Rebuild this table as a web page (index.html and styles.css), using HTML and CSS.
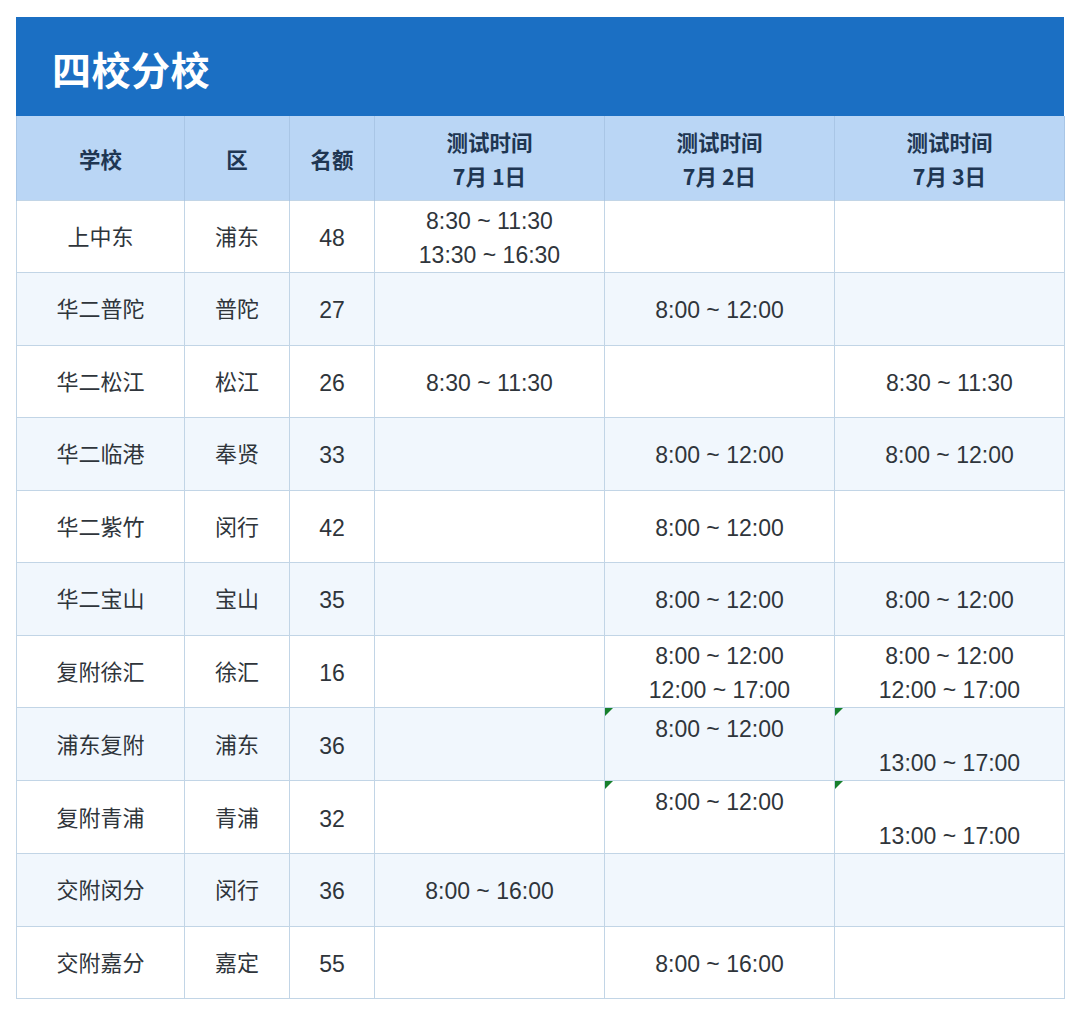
FILE: index.html
```html
<!DOCTYPE html>
<html lang="zh-CN">
<head>
<meta charset="utf-8">
<title>四校分校</title>
<link rel="stylesheet" href="styles.css">
</head>
<body>
<div class="sheet">
  <div class="title">四校分校</div>
  <table class="grid">
    <colgroup>
      <col class="c-school"><col class="c-area"><col class="c-num"><col class="c-day"><col class="c-day"><col class="c-day">
    </colgroup>
    <thead>
      <tr>
        <th>学校</th><th>区</th><th>名额</th>
        <th>测试时间<br>7月 1日</th>
        <th>测试时间<br>7月 2日</th>
        <th>测试时间<br>7月 3日</th>
      </tr>
    </thead>
    <tbody>
      <tr><td class="cn">上中东</td><td class="cn">浦东</td><td>48</td><td>8:30 ~ 11:30<br>13:30 ~ 16:30</td><td></td><td></td></tr>
      <tr><td class="cn">华二普陀</td><td class="cn">普陀</td><td>27</td><td></td><td>8:00 ~ 12:00</td><td></td></tr>
      <tr><td class="cn">华二松江</td><td class="cn">松江</td><td>26</td><td>8:30 ~ 11:30</td><td></td><td>8:30 ~ 11:30</td></tr>
      <tr><td class="cn">华二临港</td><td class="cn">奉贤</td><td>33</td><td></td><td>8:00 ~ 12:00</td><td>8:00 ~ 12:00</td></tr>
      <tr><td class="cn">华二紫竹</td><td class="cn">闵行</td><td>42</td><td></td><td>8:00 ~ 12:00</td><td></td></tr>
      <tr><td class="cn">华二宝山</td><td class="cn">宝山</td><td>35</td><td></td><td>8:00 ~ 12:00</td><td>8:00 ~ 12:00</td></tr>
      <tr><td class="cn">复附徐汇</td><td class="cn">徐汇</td><td>16</td><td></td><td>8:00 ~ 12:00<br>12:00 ~ 17:00</td><td>8:00 ~ 12:00<br>12:00 ~ 17:00</td></tr>
      <tr><td class="cn">浦东复附</td><td class="cn">浦东</td><td>36</td><td></td><td class="flag">8:00 ~ 12:00<br>&nbsp;</td><td class="flag">&nbsp;<br>13:00 ~ 17:00</td></tr>
      <tr><td class="cn">复附青浦</td><td class="cn">青浦</td><td>32</td><td></td><td class="flag">8:00 ~ 12:00<br>&nbsp;</td><td class="flag">&nbsp;<br>13:00 ~ 17:00</td></tr>
      <tr><td class="cn">交附闵分</td><td class="cn">闵行</td><td>36</td><td>8:00 ~ 16:00</td><td></td><td></td></tr>
      <tr><td class="cn">交附嘉分</td><td class="cn">嘉定</td><td>55</td><td></td><td>8:00 ~ 16:00</td><td></td></tr>
    </tbody>
  </table>
</div>
</body>
</html>
```

FILE: styles.css
```css
html, body {
  margin: 0;
  padding: 0;
  background: #ffffff;
}

body {
  font-family: "Liberation Sans", "Noto Sans CJK SC", sans-serif;
  color: #2f353b;
}

.sheet {
  width: 1048px;
  margin: 17px 0 0 16px;
}

.title {
  height: 99px;
  background: #1b6fc3;
  color: #ffffff;
  font-family: "Noto Sans CJK SC", sans-serif;
  font-size: 39px;
  font-weight: 700;
  line-height: 99px;
  padding-left: 36px;
  letter-spacing: 0.5px;
  border-top: 2px solid #1b6fc3;
  box-sizing: border-box;
}

.grid {
  width: 1048px;
  table-layout: fixed;
  border-collapse: collapse;
}

.c-school { width: 168px; }
.c-area { width: 105px; }
.c-num { width: 85px; }
.c-day { width: 230px; }

.grid thead tr {
  height: 84px;
}

.grid th {
  background: #bad6f5;
  color: #1f3652;
  font-family: "Noto Sans CJK SC", sans-serif;
  font-size: 21.5px;
  font-weight: 700;
  line-height: 34px;
  border-left: 1.5px solid #a9c6e6;
  border-right: 1.5px solid #a9c6e6;
  padding: 2px 0 0;
  text-align: center;
  vertical-align: middle;
}

.grid tbody tr {
  height: 72.5px;
}

.grid td {
  border: 1.5px solid #c2d5e6;
  padding: 3px 0 0;
  text-align: center;
  vertical-align: middle;
  font-size: 23px;
  line-height: 34px;
  position: relative;
}

.grid td.cn {
  font-size: 22px;
}

.grid tbody tr:nth-child(even) td {
  background: #f1f7fd;
}

.grid tbody tr:nth-child(odd) td {
  background: #ffffff;
}

.grid td.flag {
  vertical-align: top;
  padding-top: 4px;
}

.grid td.flag::before {
  content: "";
  position: absolute;
  left: 0;
  top: 0;
  border-top: 8px solid #17802c;
  border-right: 8px solid transparent;
}
```
